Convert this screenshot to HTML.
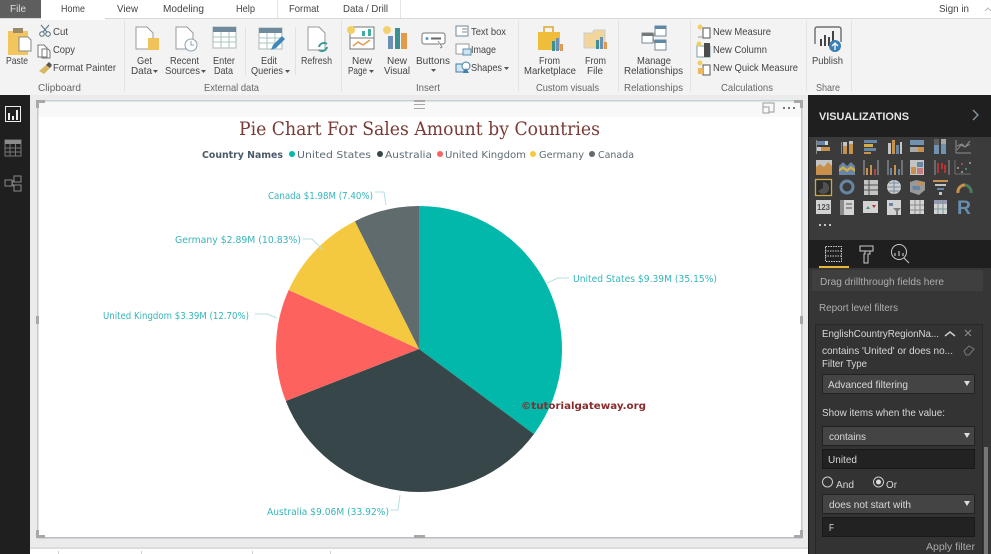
<!DOCTYPE html>
<html><head><meta charset="utf-8"><style>
html,body{margin:0;padding:0;background:#fff;width:991px;height:554px;overflow:hidden}
svg{display:block;position:absolute;left:0;top:0;filter:blur(.35px)}
text{font-family:"Liberation Sans",sans-serif;font-size:10.5px;fill:#4a4a4a;white-space:pre}
.g{fill:#666;}
.l{fill:#35b5ba;font-size:9.5px;font-family:"DejaVu Sans",sans-serif}
.k{fill:#5d6b73;font-size:10px;font-family:"DejaVu Sans",sans-serif}
.w{fill:#d8d8d8;font-size:10.5px}
.t{fill:#444;font-size:10.5px}
</style></head><body>
<svg width="991" height="554" viewBox="0 0 991 554" xmlns="http://www.w3.org/2000/svg">
<!-- ribbon -->
<rect width="991" height="554" fill="#fff"/>
<rect y="18" width="991" height="77" fill="#f3f3f3"/>
<rect x="105" y="18" width="886" height="1" fill="#d9d9d9"/>
<rect x="0" y="18" width="41" height="1" fill="#d9d9d9"/>
<rect width="41" height="18" fill="#5e5e5e"/>
<rect x="41" y="0" width="64" height="20" fill="#fff"/>
<rect x="277" y="0" width="1" height="18" fill="#e4e4e4"/>
<rect x="400" y="0" width="1" height="18" fill="#e4e4e4"/>
<text x="10" y="12" textLength="16" lengthAdjust="spacingAndGlyphs" style="fill:#ddd">File</text>
<text class="t" x="61" y="12" textLength="24" lengthAdjust="spacingAndGlyphs">Home</text>
<text class="t" x="117" y="12" textLength="21" lengthAdjust="spacingAndGlyphs">View</text>
<text class="t" x="163" y="12" textLength="41" lengthAdjust="spacingAndGlyphs">Modeling</text>
<text class="t" x="236" y="12" textLength="19" lengthAdjust="spacingAndGlyphs">Help</text>
<text class="t" x="289" y="12" textLength="30" lengthAdjust="spacingAndGlyphs">Format</text>
<text class="t" x="343" y="12" textLength="45" lengthAdjust="spacingAndGlyphs">Data / Drill</text>
<text class="t" x="939" y="12" textLength="30" lengthAdjust="spacingAndGlyphs">Sign in</text>
<path d="M985 11l3-3 3 3" fill="none" stroke="#bbb"/>
<!-- ribbon seps -->
<g fill="#e2e2e2"><rect x="124" y="21" width="1" height="70"/><rect x="341" y="21" width="1" height="70"/><rect x="518" y="21" width="1" height="70"/><rect x="618" y="21" width="1" height="70"/><rect x="690" y="21" width="1" height="70"/><rect x="806" y="21" width="1" height="70"/><rect x="851" y="21" width="1" height="70"/><rect x="245" y="27" width="1" height="48"/><rect x="295" y="27" width="1" height="48"/></g>
<!-- ribbon labels -->
<text class="t" x="6" y="64" textLength="22" lengthAdjust="spacingAndGlyphs">Paste</text>
<text class="t" x="53" y="35" textLength="15" lengthAdjust="spacingAndGlyphs">Cut</text>
<text class="t" x="53" y="53" textLength="22" lengthAdjust="spacingAndGlyphs">Copy</text>
<text class="t" x="53" y="71" textLength="63" lengthAdjust="spacingAndGlyphs">Format Painter</text>
<text class="g" x="38" y="91" textLength="43" lengthAdjust="spacingAndGlyphs">Clipboard</text>
<text class="t" x="137" y="64" textLength="15" lengthAdjust="spacingAndGlyphs">Get</text>
<text class="t" x="131" y="74" textLength="21" lengthAdjust="spacingAndGlyphs">Data</text>
<text class="t" x="170" y="64" textLength="29" lengthAdjust="spacingAndGlyphs">Recent</text>
<text class="t" x="165" y="74" textLength="35" lengthAdjust="spacingAndGlyphs">Sources</text>
<text class="t" x="213" y="64" textLength="22" lengthAdjust="spacingAndGlyphs">Enter</text>
<text class="t" x="214" y="74" textLength="19" lengthAdjust="spacingAndGlyphs">Data</text>
<text class="t" x="261" y="64" textLength="16" lengthAdjust="spacingAndGlyphs">Edit</text>
<text class="t" x="251" y="74" textLength="32" lengthAdjust="spacingAndGlyphs">Queries</text>
<text class="t" x="301" y="64" textLength="31" lengthAdjust="spacingAndGlyphs">Refresh</text>
<text class="g" x="204" y="91" textLength="55" lengthAdjust="spacingAndGlyphs">External data</text>
<text class="t" x="352" y="64" textLength="20" lengthAdjust="spacingAndGlyphs">New</text>
<text class="t" x="348" y="74" textLength="19" lengthAdjust="spacingAndGlyphs">Page</text>
<text class="t" x="387" y="64" textLength="20" lengthAdjust="spacingAndGlyphs">New</text>
<text class="t" x="384" y="74" textLength="26" lengthAdjust="spacingAndGlyphs">Visual</text>
<text class="t" x="416" y="64" textLength="34" lengthAdjust="spacingAndGlyphs">Buttons</text>
<text class="t" x="471" y="35" textLength="35" lengthAdjust="spacingAndGlyphs">Text box</text>
<text class="t" x="471" y="53" textLength="25" lengthAdjust="spacingAndGlyphs">Image</text>
<text class="t" x="471" y="71" textLength="31" lengthAdjust="spacingAndGlyphs">Shapes</text>
<text class="g" x="416" y="91" textLength="24" lengthAdjust="spacingAndGlyphs">Insert</text>
<text class="t" x="539" y="64" textLength="21" lengthAdjust="spacingAndGlyphs">From</text>
<text class="t" x="524" y="74" textLength="52" lengthAdjust="spacingAndGlyphs">Marketplace</text>
<text class="t" x="585" y="64" textLength="21" lengthAdjust="spacingAndGlyphs">From</text>
<text class="t" x="587" y="74" textLength="16" lengthAdjust="spacingAndGlyphs">File</text>
<text class="g" x="536" y="91" textLength="63" lengthAdjust="spacingAndGlyphs">Custom visuals</text>
<text class="t" x="637" y="64" textLength="34" lengthAdjust="spacingAndGlyphs">Manage</text>
<text class="t" x="624" y="74" textLength="59" lengthAdjust="spacingAndGlyphs">Relationships</text>
<text class="g" x="624" y="91" textLength="59" lengthAdjust="spacingAndGlyphs">Relationships</text>
<text class="t" x="713" y="35" textLength="58" lengthAdjust="spacingAndGlyphs">New Measure</text>
<text class="t" x="713" y="53" textLength="54" lengthAdjust="spacingAndGlyphs">New Column</text>
<text class="t" x="713" y="71" textLength="85" lengthAdjust="spacingAndGlyphs">New Quick Measure</text>
<text class="g" x="721" y="91" textLength="52" lengthAdjust="spacingAndGlyphs">Calculations</text>
<text class="t" x="812" y="64" textLength="31" lengthAdjust="spacingAndGlyphs">Publish</text>
<text class="g" x="816" y="91" textLength="24" lengthAdjust="spacingAndGlyphs">Share</text>
<!-- carets -->
<g fill="#555"><path d="M153 70h5l-2.500 3z"/><path d="M201 70h5l-2.500 3z"/><path d="M285 70h5l-2.500 3z"/><path d="M369 70h5l-2.500 3z"/><path d="M431 69h5l-2.500 3z"/><path d="M504 67h5l-2.500 3z"/></g>
<!-- paste -->
<rect x="8" y="31" width="20" height="24" fill="#f2c65c"/><rect x="13" y="28" width="10" height="5" fill="#9a8a6a"/><path d="M19 37h9l3 3v11H19z" fill="#fff" stroke="#888"/>
<!-- cut copy painter -->
<g fill="none" stroke="#55707f" stroke-width="1"><circle cx="42" cy="34" r="2.300"/><circle cx="48" cy="34" r="2.300"/><path d="M43 32l6-7M47 32l-6-7"/><path d="M38 45h6l3 3v9H38zM42 49h6l2 2v7h-8z" fill="#fff" stroke="#777"/></g>
<path d="M39 71l7-6 4 3-6 6z" fill="#d9b860"/><path d="M46 65l3-3 3 3-2 3z" fill="#555"/>
<!-- doc icons -->
<g fill="#fff" stroke="#999"><path d="M136 27h11l6 6v16h-17z"/><path d="M176 27h11l6 6v16h-17z"/><path d="M308 27h11l6 6v17h-17z"/></g>
<rect x="148" y="38" width="11" height="12" fill="#efc25a"/>
<circle cx="191" cy="45" r="6" fill="#fff" stroke="#8aa3b0"/><path d="M191 41v4h3" fill="none" stroke="#8aa3b0"/>
<rect x="213" y="27" width="23" height="21" fill="#fff" stroke="#a8b8b8"/><rect x="213" y="27" width="23" height="5" fill="#6f8a9c"/><path d="M213 37h23M213 42h23M221 32v16M229 32v16" stroke="#a8c4c0" fill="none"/>
<rect x="259" y="28" width="23" height="21" fill="#fff" stroke="#a8b8b8"/><rect x="259" y="28" width="23" height="5" fill="#6f8a9c"/><path d="M259 38h23M259 43h23M267 33v16M275 33v16" stroke="#a8c4c0" fill="none"/><path d="M271 50l2-5 9-9 3 3-9 9z" fill="#3f86b8"/>
<path d="M319 47a5 5 0 0 1 8-3M327 47a5 5 0 0 1-8 3" fill="none" stroke="#3a9a94" stroke-width="2"/>
<!-- new page/visual -->
<rect x="350" y="27" width="24" height="22" fill="#fff" stroke="#777"/><path d="M350 38h24" stroke="#777"/><path d="M353 46l5-4 5 3 7-5" fill="none" stroke="#e29a4c" stroke-width="1.500"/><circle cx="351" cy="30" r="4" fill="#f2cf62"/><rect x="362" y="31" width="3" height="5" fill="#3fae9f"/><rect x="368" y="29" width="3" height="7" fill="#3fae9f"/>
<circle cx="387" cy="30" r="4" fill="#f3d16f"/><rect x="388" y="36" width="5" height="13" fill="#6b8fb5"/><rect x="395" y="28" width="5" height="21" fill="#3d8f92"/><rect x="401" y="33" width="6" height="16" fill="#e29a4c"/>
<rect x="422" y="33" width="23" height="11" rx="2" fill="#fff" stroke="#777"/><path d="M431 38.500h10" stroke="#666" stroke-width="2"/><circle cx="427" cy="38.500" r="1.500" fill="#5b9bc4"/><path d="M438 41l4 6-2 1" fill="#fff" stroke="#888"/>
<!-- textbox etc -->
<rect x="456" y="26" width="12" height="10" fill="#fff" stroke="#6f8a9c"/><path d="M462 29h5M462 32h5" stroke="#888"/>
<rect x="456" y="44" width="13" height="10" fill="#fff" stroke="#999"/><rect x="463" y="49" width="8" height="6" fill="#cfe4f2" stroke="#5c8fb0"/>
<path d="M456 64h8v8h-8z" fill="#d5e6f2" stroke="#3f7fa8"/><circle cx="466" cy="66" r="4" fill="#fff" stroke="#3f7fa8"/><path d="M463 73l3-5 3 5z" fill="#3f7fa8"/>
<!-- marketplace -->
<rect x="538" y="32" width="22" height="18" fill="#efbd3a"/><path d="M544 32v-5h9v5" fill="none" stroke="#d9a92e" stroke-width="1.500"/><rect x="552" y="41" width="3" height="10" fill="#3d8f92"/><rect x="556" y="38" width="3" height="13" fill="#6b8fb5"/><rect x="560" y="44" width="3" height="7" fill="#e29a4c"/>
<path d="M584 33h8l2-3h11v18h-21z" fill="#f1d59a" stroke="#ccc"/><rect x="596" y="40" width="3" height="9" fill="#3d8f92"/><rect x="600" y="37" width="3" height="12" fill="#6b8fb5"/><rect x="604" y="42" width="3" height="7" fill="#e29a4c"/>
<!-- manage rel -->
<g fill="#fff" stroke="#6f8a9c"><rect x="642" y="33" width="11" height="10"/><rect x="655" y="26" width="11" height="10"/><rect x="655" y="40" width="11" height="10"/></g><path d="M653 38l2-6M653 38l2 6" stroke="#888" fill="none"/><rect x="655" y="26" width="11" height="3" fill="#5f88a6"/><rect x="655" y="40" width="11" height="3" fill="#5f88a6"/><rect x="642" y="33" width="11" height="3" fill="#777"/>
<!-- calc -->
<g><circle cx="700" cy="27" r="2.500" fill="#f2cf62"/><rect x="703" y="28" width="7" height="10" fill="#fff" stroke="#555"/><path d="M698 37h5" stroke="#999"/>
<rect x="697" y="46" width="13" height="11" fill="#fff" stroke="#7ba3a8"/><rect x="704" y="43" width="6" height="14" fill="#4c4c4c"/><circle cx="699" cy="44" r="2.500" fill="#f2cf62"/>
<circle cx="700" cy="63" r="2.500" fill="#f2cf62"/><rect x="703" y="65" width="7" height="10" fill="#fff" stroke="#555"/><rect x="698" y="68" width="5" height="6" fill="#eeb95c"/></g>
<!-- publish -->
<path d="M815 44v-15a2 2 0 0 1 2-2h22a2 2 0 0 1 2 2v13" fill="none" stroke="#555" stroke-width="1.200"/><g fill="#444"><rect x="820" y="39" width="2" height="7"/><rect x="824" y="35" width="2" height="11"/><rect x="828" y="37" width="2" height="9"/><rect x="832" y="31" width="2" height="11"/></g><circle cx="835" cy="46" r="6" fill="#3a7fb5"/><path d="M835 50v-7M832 46l3-3 3 3" stroke="#fff" fill="none" stroke-width="1.300"/>
<!-- canvas -->
<rect y="95" width="808" height="459" fill="#ebebeb"/>
<rect x="0" y="95" width="30" height="459" fill="#1f1f1f"/>
<rect x="30" y="549" width="778" height="5" fill="#fff"/>
<rect x="30" y="547" width="778" height="2" fill="#dcdcdc"/>
<g fill="#cfcfcf"><rect x="58" y="551" width="1" height="3"/><rect x="141" y="551" width="1" height="3"/><rect x="252" y="551" width="1" height="3"/><rect x="330" y="551" width="1" height="3"/></g>
<rect x="37" y="100" width="765" height="437" fill="#fff"/>
<rect x="38" y="101" width="764" height="16" fill="#f8f8f8"/>
<rect x="37" y="100" width="765" height="1.500" fill="#c4d2d6"/>
<rect x="37" y="100" width="1.500" height="437" fill="#c0c8d0"/>
<rect x="801" y="100" width="1.500" height="437" fill="#c0c8d0"/>
<rect x="37" y="537" width="765" height="1.500" fill="#b8bcc4"/>
<g fill="#a8a8a8"><path d="M36 100h9v3h-6v5h-3zM794 100h9v8h-3v-5h-6zM36 530h3v5h6v3h-9zM794 535h6v-5h3v8h-9z"/><rect x="36" y="316" width="3" height="8"/><rect x="800" y="316" width="3" height="8"/><rect x="414" y="100" width="11" height="2"/><rect x="414" y="104" width="11" height="1"/><rect x="414" y="108" width="11" height="1"/><rect x="414" y="535" width="11" height="3"/></g>
<path d="M763 107v-4h11v9h-5M763 107h6v6h-6z" fill="none" stroke="#9a9a9a"/><g fill="#777"><rect x="783" y="107" width="2" height="2"/><rect x="788" y="107" width="2" height="2"/><rect x="793" y="107" width="2" height="2"/></g>
<!-- sidebar icons -->
<rect x="5.500" y="106.500" width="15" height="15" fill="none" stroke="#eee"/><g fill="#eee"><rect x="8" y="113" width="2" height="7"/><rect x="12" y="116" width="2" height="4"/><rect x="16" y="110" width="2" height="10"/></g>
<rect x="5" y="140" width="16" height="16" fill="none" stroke="#777"/><rect x="5" y="140" width="16" height="4" fill="#8a8a8a"/><path d="M5 148h16M5 152h16M10 144v12M15.500 144v12" stroke="#777" fill="none"/>
<g fill="none" stroke="#8a8a8a"><rect x="5" y="180" width="7" height="6"/><rect x="14" y="176" width="7" height="6"/><rect x="14" y="185" width="7" height="6"/><path d="M12 183l2-3M12 183l2 4"/></g>
<!-- chart -->
<text x="239" y="135" textLength="361" lengthAdjust="spacingAndGlyphs" style="font-family:'DejaVu Serif','Liberation Serif',serif;font-size:19px;fill:#7a3b36">Pie Chart For Sales Amount by Countries</text>
<text class="k" x="202" y="158" textLength="81" lengthAdjust="spacingAndGlyphs" style="font-weight:bold;fill:#4b5a68">Country Names</text>
<circle cx="292" cy="154" r="3" fill="#01b8aa"/><text class="k" x="297" y="158" textLength="74" lengthAdjust="spacingAndGlyphs">United States</text>
<circle cx="380" cy="154" r="3" fill="#374649"/><text class="k" x="385" y="158" textLength="47" lengthAdjust="spacingAndGlyphs">Australia</text>
<circle cx="440" cy="154" r="3" fill="#fd625e"/><text class="k" x="445" y="158" textLength="81" lengthAdjust="spacingAndGlyphs">United Kingdom</text>
<circle cx="533" cy="154" r="3" fill="#f5c93f"/><text class="k" x="539" y="158" textLength="45" lengthAdjust="spacingAndGlyphs">Germany</text>
<circle cx="592" cy="154" r="3" fill="#5f6b6d"/><text class="k" x="598" y="158" textLength="36" lengthAdjust="spacingAndGlyphs">Canada</text>
<!-- pie -->
<path d="M419 349V206A143 143 0 0 1 533.900 434.100Z" fill="#01b8aa"/>
<path d="M419 349L533.900 434.100A143 143 0 0 1 285.800 401Z" fill="#374649"/>
<path d="M419 349L285.800 401A143 143 0 0 1 288.700 290Z" fill="#fd625e"/>
<path d="M419 349L288.700 290A143 143 0 0 1 354.900 221.200Z" fill="#f5c93f"/>
<path d="M419 349L354.900 221.200A143 143 0 0 1 419 206Z" fill="#5f6b6d"/>
<g fill="none" stroke="#b7dfe2" stroke-width="1"><path d="M375 192h9l2 13"/><path d="M547 283l11-5h11"/><path d="M303 239h9l11 11"/><path d="M255 314h12l10 4"/><path d="M390 510h8l2-15"/></g>
<text class="l" x="268" y="199" textLength="105" lengthAdjust="spacingAndGlyphs">Canada $1.98M (7.40%)</text>
<text class="l" x="573" y="282" textLength="144" lengthAdjust="spacingAndGlyphs">United States $9.39M (35.15%)</text>
<text class="l" x="175" y="243" textLength="126" lengthAdjust="spacingAndGlyphs">Germany $2.89M (10.83%)</text>
<text class="l" x="103" y="319" textLength="146" lengthAdjust="spacingAndGlyphs">United Kingdom $3.39M (12.70%)</text>
<text class="l" x="267" y="515" textLength="122" lengthAdjust="spacingAndGlyphs">Australia $9.06M (33.92%)</text>
<text x="521" y="409" textLength="125" lengthAdjust="spacingAndGlyphs" style="font-family:'DejaVu Sans',sans-serif;font-weight:bold;font-size:10px;fill:#8a2b2b">©tutorialgateway.org</text>
<!-- right panel -->
<rect x="808" y="95" width="183" height="459" fill="#1f1f1f"/>
<rect x="809" y="137" width="182" height="103" fill="#3b3b3b"/>
<rect x="809" y="268" width="182" height="286" fill="#363636"/>
<text x="819" y="120" textLength="90" lengthAdjust="spacingAndGlyphs" style="font-weight:bold;font-size:11px;fill:#e4e4e4">VISUALIZATIONS</text>
<path d="M973 110l5 5-5 5" fill="none" stroke="#8a9aa5" stroke-width="1.300"/>
<!-- viz icons -->
<g opacity=".85">
<g transform="translate(816,140)"><rect y="1" width="9" height="4" fill="#6f94b8"/><rect y="1" x="9" width="3" height="4" fill="#eeeeee"/><rect y="7" width="5" height="4" fill="#e5e5e5"/><rect y="7" x="5" width="9" height="4" fill="#e0a050"/><rect y="0" x="0" width="1" height="14" fill="#999"/></g>
<g transform="translate(840,140)"><rect y="2" x="1" width="1" height="12" fill="#999"/><rect x="3" y="6" width="4" height="8" fill="#e0a050"/><rect x="3" y="2" width="4" height="4" fill="#ddd"/><rect x="9" y="4" width="4" height="10" fill="#e0a050"/><rect x="9" y="1" width="4" height="3" fill="#ddd"/></g>
<g transform="translate(864,140)"><rect width="13" height="3" fill="#6f94b8"/><rect y="4" width="9" height="3" fill="#eec14b"/><rect y="8" width="12" height="3" fill="#6f94b8"/><rect y="12" width="7" height="2" fill="#e0a050"/></g>
<g transform="translate(887,139)"><rect x="1" y="4" width="3" height="11" fill="#ddd"/><rect x="5" y="1" width="3" height="14" fill="#e0a050"/><rect x="9" y="6" width="3" height="9" fill="#6f94b8"/><rect x="13" y="3" width="2" height="12" fill="#ddd"/></g>
<g transform="translate(910,140)"><rect width="14" height="5" fill="#7aa0c4"/><rect y="7" width="14" height="5" fill="#bbb"/><rect x="8" y="7" width="6" height="5" fill="#e0a050"/></g>
<g transform="translate(934,139)"><rect width="5" height="15" fill="#7aa0c4"/><rect width="5" height="6" fill="#666"/><rect x="7" width="5" height="15" fill="#7aa0c4"/><rect x="7" width="5" height="5" fill="#bbb"/></g>
<path d="M956 153v-13M956 153h15M957 150l4-5 4 2 5-6M957 146l5-2 3 3 5-3" fill="none" stroke="#9c9c9c"/>
<g transform="translate(816,160)"><rect y="0" width="16" height="15" fill="#ddd"/><path d="M0 15V7l4-3 4 3 4-5 4 4v9z" fill="#e0a050"/></g>
<g transform="translate(839,160)"><path d="M0 15V6l4-4 4 4 4-4 4 4v9z" fill="#6f94b8"/><path d="M0 9l4-3 4 3 4-3 4 3v3l-4-3-4 3-4-3-4 3z" fill="#eec14b"/></g>
<g transform="translate(863,160)"><path d="M1 0v15M15 0v15" stroke="#bbb"/><rect x="3" y="8" width="2" height="7" fill="#e0a050"/><rect x="7" y="5" width="2" height="10" fill="#e0a050"/><rect x="11" y="9" width="2" height="6" fill="#c44"/></g>
<g transform="translate(887,160)"><path d="M1 0v15M15 0v15" stroke="#bbb"/><rect x="3" y="8" width="2" height="7" fill="#6f94b8"/><rect x="7" y="5" width="2" height="10" fill="#e0a050"/><rect x="11" y="9" width="2" height="6" fill="#6f94b8"/></g>
<g transform="translate(910,160)"><rect width="14" height="15" fill="#ddd"/><rect x="1" y="7" width="5" height="7" fill="#e0a050"/><rect x="7" y="2" width="6" height="5" fill="#6f94b8"/><rect x="7" y="8" width="6" height="6" fill="#d88"/></g>
<g transform="translate(934,160)"><path d="M1 0v15M15 0v15" stroke="#aaa"/><path d="M4 3v10M8 3v6M11 5v8" stroke="#c33" stroke-width="2"/></g>
<g fill="#bbb"><circle cx="958" cy="168" r="1"/><circle cx="962" cy="164" r="1" fill="#d55"/><circle cx="966" cy="169" r="1" fill="#5a9"/><circle cx="970" cy="163" r="1"/><circle cx="962" cy="172" r="1"/><path d="M955 160v14h16" fill="none" stroke="#888" stroke-width=".8"/></g>
<rect x="815.500" y="179.500" width="16" height="16" fill="#2a2a2a" stroke="#e8bc45" stroke-width="1.300"/><path d="M823 182a6 6 0 1 1-5 9l5-3z" fill="#555"/>
<circle cx="847" cy="187" r="6" fill="none" stroke="#6f94b8" stroke-width="3"/>
<g transform="translate(864,180)"><rect width="14" height="15" fill="#ddd"/><path d="M0 5h14M0 10h14M5 0v15" stroke="#555"/></g>
<circle cx="894" cy="187" r="7" fill="#e8e8e8"/><path d="M887 187h14M894 180v14M889 183h10M889 191h10" stroke="#7f9bb5" fill="none"/>
<g transform="translate(910,180)"><path d="M0 2l6-2 9 2v8l-6 5-9-3z" fill="#aaa"/><path d="M2 6h8v4H3z" fill="#6f94b8"/><path d="M8 2h5v3H8z" fill="#e0a050"/></g>
<g transform="translate(933,180)"><rect width="15" height="2" fill="#e0a050"/><rect x="2" y="4" width="11" height="2" fill="#ddd"/><rect x="4" y="8" width="7" height="2" fill="#6f94b8"/><rect x="6" y="12" width="3" height="3" fill="#ddd"/></g>
<path d="M958 193a7 7 0 0 1 7-8" fill="none" stroke="#e0a050" stroke-width="3"/><path d="M965 185a7 7 0 0 1 6 8" fill="none" stroke="#6fa" stroke-opacity=".4" stroke-width="3"/>
<rect x="816" y="200" width="15" height="14" fill="#eee"/><text x="817" y="210" textLength="13" lengthAdjust="spacingAndGlyphs" style="font-size:8px;font-weight:bold;fill:#555">123</text>
<rect x="840" y="200" width="14" height="15" fill="#eee"/><rect x="840" y="200" width="4" height="15" fill="#999"/><path d="M846 204h6M846 208h6" stroke="#555"/>
<rect x="863" y="201" width="15" height="12" fill="#eee"/><path d="M866 209l2-3 2 3z" fill="#4a8"/><path d="M872 205h4l-2 3z" fill="#c33"/>
<rect x="887" y="200" width="14" height="15" fill="#eee"/><rect x="889" y="203" width="4" height="3" fill="#6f94b8"/><path d="M893 208h8l-3 3v4h-2v-4z" fill="#888"/>
<g transform="translate(910,200)"><rect width="14" height="14" fill="#eee"/><path d="M0 5h14M0 10h14M5 0v14M10 0v14" stroke="#999"/></g>
<g transform="translate(934,200)"><rect width="13" height="14" fill="#eee"/><rect width="13" height="4" fill="#aac"/><path d="M0 9h13M4 0v14M9 0v14" stroke="#8aa" fill="none"/></g>
<text x="957" y="214" style="font-size:19px;font-weight:bold;fill:#6f9cc4" textLength="14" lengthAdjust="spacingAndGlyphs">R</text>
<g fill="#ddd"><rect x="819" y="224" width="2" height="2"/><rect x="824" y="224" width="2" height="2"/><rect x="829" y="224" width="2" height="2"/></g>
</g>
<!-- tabs -->
<g fill="none" stroke="#ccc" stroke-dasharray="1.500 1"><rect x="825.500" y="246.500" width="16" height="15"/><path d="M825 251h17M825 256h17"/></g>
<rect x="819" y="266" width="30" height="2" fill="#e8b83c"/>
<path d="M860 246h13v5h-13zM865 251h5v3h-2v9h-4v-9h1z" fill="none" stroke="#ccc"/>
<circle cx="899" cy="252" r="7.500" fill="none" stroke="#ccc"/><path d="M904 258l5 5" stroke="#ccc"/><path d="M895 256v-3M899 256v-5M903 256v-3" stroke="#ddd"/>
<rect x="812" y="270" width="171" height="21" fill="#3f3f3f"/>
<text x="820" y="285" textLength="124" lengthAdjust="spacingAndGlyphs" style="fill:#aeaeae">Drag drillthrough fields here</text>
<text x="819" y="311" textLength="79" lengthAdjust="spacingAndGlyphs" style="fill:#aeaeae">Report level filters</text>
<!-- filter card -->
<rect x="815.500" y="324.500" width="167" height="240" fill="#333" stroke="#282828"/>
<text class="w" x="822" y="337" textLength="117" lengthAdjust="spacingAndGlyphs">EnglishCountryRegionNa...</text>
<path d="M945 336l5-4 5 4" fill="none" stroke="#ccc" stroke-width="1.500"/>
<path d="M965 330l6 6M971 330l-6 6" stroke="#888" stroke-width="1.200"/>
<text class="w" x="822" y="354" textLength="131" lengthAdjust="spacingAndGlyphs">contains 'United' or does no...</text>
<path d="M964 351l5-5 5 3-5 6h-3z" fill="none" stroke="#777"/>
<text class="w" x="822" y="367" textLength="45" lengthAdjust="spacingAndGlyphs">Filter Type</text>
<g fill="#444" stroke="#222"><rect x="822.500" y="374.500" width="152" height="19"/><rect x="822.500" y="426.500" width="152" height="19"/><rect x="822.500" y="494.500" width="152" height="19"/></g>
<g fill="#222" stroke="#191919"><rect x="822.500" y="449.500" width="152" height="19"/><rect x="822.500" y="517.500" width="152" height="19"/></g>
<g fill="#ddd"><path d="M964 381h6l-3 5z"/><path d="M964 433h6l-3 5z"/><path d="M964 501h6l-3 5z"/></g>
<text class="w" x="828" y="388" textLength="80" lengthAdjust="spacingAndGlyphs">Advanced filtering</text>
<text class="w" x="822" y="416" textLength="123" lengthAdjust="spacingAndGlyphs">Show items when the value:</text>
<text class="w" x="829" y="440" textLength="37" lengthAdjust="spacingAndGlyphs">contains</text>
<text class="w" x="828" y="463" textLength="29" lengthAdjust="spacingAndGlyphs">United</text>
<circle cx="827.500" cy="482" r="5" fill="none" stroke="#ccc"/>
<text class="w" x="836" y="488" textLength="18" lengthAdjust="spacingAndGlyphs">And</text>
<circle cx="878.500" cy="482" r="5" fill="none" stroke="#ccc"/><circle cx="878.500" cy="482" r="2.500" fill="#ddd"/>
<text class="w" x="886" y="488" textLength="11" lengthAdjust="spacingAndGlyphs">Or</text>
<text class="w" x="829" y="508" textLength="82" lengthAdjust="spacingAndGlyphs">does not start with</text>
<text class="w" x="829" y="531" textLength="5" lengthAdjust="spacingAndGlyphs">F</text>
<text x="926" y="550" textLength="49" lengthAdjust="spacingAndGlyphs" style="fill:#aaa">Apply filter</text>
<rect x="984" y="447" width="4" height="107" fill="#777"/>
</svg>
</body></html>
